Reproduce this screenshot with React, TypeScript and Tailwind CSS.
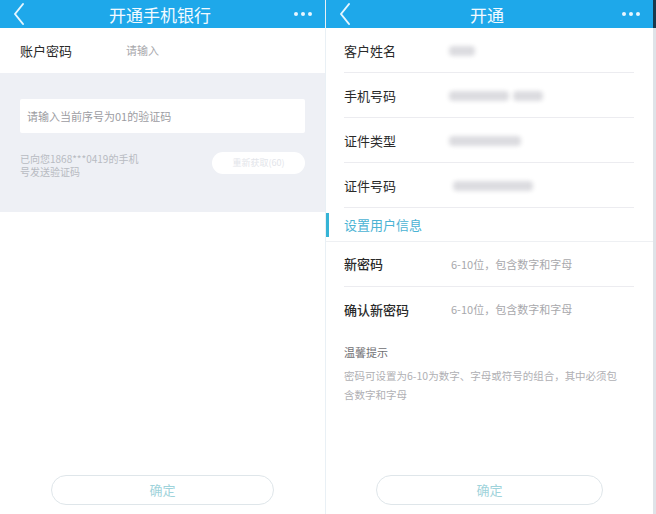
import React from 'react';

const font = { fontFamily: '"Noto Sans CJK SC", "Noto Sans", sans-serif' };

function Header({ title }: { title: string }) {
  return (
    <div className="flex h-[28px] items-center justify-between bg-[#1ea8ea] pl-[12px] pr-[12px]">
      <svg width="14" height="24" viewBox="0 0 14 24" fill="none" stroke="#e6f6ff" strokeWidth="2" strokeLinecap="round" strokeLinejoin="round">
        <polyline points="11,2 3,12 11,22" />
      </svg>
      <span className="text-[17px] leading-none text-[#f2faff]">{title}</span>
      <div className="flex gap-[3px] pr-[1px]">
        <span className="h-[4px] w-[4px] rounded-full bg-[#e8f6ff]" />
        <span className="h-[4px] w-[4px] rounded-full bg-[#e8f6ff]" />
        <span className="h-[4px] w-[4px] rounded-full bg-[#e8f6ff]" />
      </div>
    </div>
  );
}

function Blur({ w, ml = 0 }: { w: number; ml?: number }) {
  return (
    <span
      className="inline-block h-[10px] rounded-sm bg-[#dcdce0] blur-[2px]"
      style={{ width: w, marginLeft: ml }}
    />
  );
}

function InfoRow({ label, blur }: { label: string; blur: React.ReactNode }) {
  return (
    <div className="flex h-[45px] items-center border-b border-[#ececf0] pt-[2px]">
      <span className="w-[105px] text-[13px] text-[#2a2a2a]">{label}</span>
      <div className="flex items-center">{blur}</div>
    </div>
  );
}

function ConfirmButton({ width }: { width: number }) {
  return (
    <div
      className="flex h-[30px] items-center justify-center rounded-full border border-[#dfe6ea] text-[13px] text-[#9fd3db]"
      style={{ width }}
    >
      确定
    </div>
  );
}

export default function App() {
  return (
    <div className="flex h-[514px] w-[656px] overflow-hidden bg-white" style={font}>
      {/* left screen */}
      <div className="flex w-[325px] flex-col">
        <Header title="开通手机银行" />
        <div className="flex h-[45px] items-center px-[20px]">
          <span className="w-[106px] text-[13px] text-[#2a2a2a]">账户密码</span>
          <span className="text-[11px] text-[#a8a8ac]">请输入</span>
        </div>
        <div className="flex h-[139px] flex-col bg-[#eef0f5] px-[20px] pt-[26px]">
          <div className="flex h-[34px] items-center rounded-[2px] bg-white px-[7px] text-[11px] text-[#9c9ca2]">
            请输入当前序号为01的验证码
          </div>
          <div className="mt-[19px] flex items-start justify-between">
            <p className="w-[124px] text-[10px] leading-[13px] text-[#b8bbc2]">
              已向您1868***0419的手机号发送验证码
            </p>
            <div className="flex h-[22px] w-[93px] items-center justify-center rounded-full bg-white text-[9px] text-[#e3e5ea]">
              重新获取(60)
            </div>
          </div>
        </div>
        <div className="flex flex-1 items-end justify-center pb-[9px]">
          <ConfirmButton width={223} />
        </div>
      </div>

      <div className="w-px bg-[#e9f0f5]" />

      {/* right screen */}
      <div className="flex w-[327px] flex-col">
        <Header title="开通" />
        <div className="px-[19px] pl-[18px]">
          <InfoRow label="客户姓名" blur={<Blur w={26} />} />
          <InfoRow label="手机号码" blur={<><Blur w={60} /><Blur w={30} ml={4} /></>} />
          <InfoRow label="证件类型" blur={<Blur w={72} />} />
          <InfoRow label="证件号码" blur={<Blur w={80} ml={4} />} />
        </div>
        <div className="flex h-[34px] items-center border-b border-[#eef0f3]">
          <span className="h-[24px] w-[3px] bg-[#35b4d6]" />
          <span className="ml-[15px] text-[13px] text-[#4bb3d4]">设置用户信息</span>
        </div>
        <div className="px-[19px] pl-[18px]">
          <div className="flex h-[45px] items-center border-b border-[#ececf0]">
            <span className="w-[107px] text-[13px] font-medium text-[#2a2a2a]">新密码</span>
            <span className="text-[11px] text-[#a8a8ac]">6-10位，包含数字和字母</span>
          </div>
          <div className="flex h-[45px] items-center">
            <span className="w-[107px] text-[13px] font-medium text-[#2a2a2a]">确认新密码</span>
            <span className="text-[11px] text-[#a8a8ac]">6-10位，包含数字和字母</span>
          </div>
          <p className="mt-[12px] text-[11px] text-[#6e6e72]">温馨提示</p>
          <p className="mt-[5px] w-[280px] text-[10.5px] leading-[19px] text-[#b0b0b4]">
            密码可设置为6-10为数字、字母或符号的组合，其中必须包含数字和字母
          </p>
        </div>
        <div className="flex flex-1 items-end justify-center pb-[9px]">
          <ConfirmButton width={227} />
        </div>
      </div>

      <div className="flex w-[3px] flex-col bg-[#dfe3e8]">
        <div className="h-[28px] bg-[#17394c]" />
      </div>
    </div>
  );
}
